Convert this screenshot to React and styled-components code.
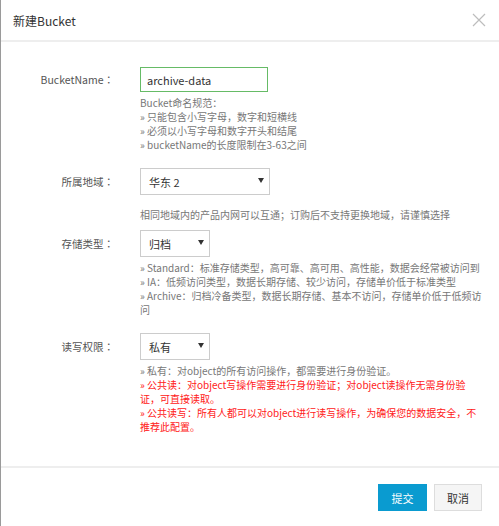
import React from "react";
import styled, { createGlobalStyle } from "styled-components";

const Global = createGlobalStyle`
  html, body { margin: 0; padding: 0; background: #fff; }
  body { font-family: "Noto Sans CJK SC", "Noto Sans", sans-serif; }
  * { box-sizing: border-box; }
`;

const Dialog = styled.div`
  width: 499px;
  height: 526px;
  border-left: 1px solid #9a9a9a;
  display: flex;
  flex-direction: column;
  background: #fff;
`;

const Header = styled.div`
  height: 42px;
  border-bottom: 2px solid #eeeeee;
  display: flex;
  align-items: center;
  justify-content: space-between;
  padding: 0 13px 0 12px;
`;

const Title = styled.div`
  font-size: 12px;
  color: #333;
  margin-top: 1px;
`;

const Close = styled.button`
  border: 0;
  background: none;
  padding: 0;
  width: 14px;
  height: 14px;
  display: flex;
  cursor: pointer;
`;

const Body = styled.div`
  flex: 1;
  padding-top: 25px;
`;

const Row = styled.div`
  display: grid;
  grid-template-columns: 113px 1fr;
  column-gap: 26px;
  margin-top: ${(p) => p.$mt || 0}px;
`;

const Label = styled.div`
  grid-column: 1;
  grid-row: 1;
  text-align: right;
  align-self: center;
  font-size: 10.5px;
  color: #555;
`;

const Colon = styled.span`
  font-family: "Noto Sans CJK TC", "Noto Sans CJK SC", sans-serif;
`;

const Control = styled.div`
  grid-column: 2;
  grid-row: 1;
  display: flex;
`;

const Input = styled.div`
  width: 128px;
  height: 25px;
  border: 1px solid #66bb66;
  font-size: 11px;
  color: #333;
  display: flex;
  align-items: center;
  padding-left: 6px;
`;

const Select = styled.div`
  width: ${(p) => p.$w}px;
  height: 27px;
  border: 1px solid #cccccc;
  font-size: 11px;
  color: #333;
  display: flex;
  align-items: center;
  justify-content: space-between;
  padding: 0 5px 0 8px;
`;

const Caret = styled.span`
  width: 0;
  height: 0;
  border-left: 3px solid transparent;
  border-right: 3px solid transparent;
  border-top: 5px solid #333;
  margin-top: -3px;
`;

const Help = styled.div`
  grid-column: 2;
  grid-row: 2;
  margin-top: ${(p) => p.$mt}px;
  font-size: 10px;
  line-height: 14px;
  color: #777;
  width: 345px;
`;

const Line = styled.div`
  white-space: nowrap;
  color: ${(p) => (p.$red ? "#ff2020" : "inherit")};
`;

const Footer = styled.div`
  height: 60px;
  border-top: 2px solid #eeeeee;
  display: flex;
  justify-content: flex-end;
  align-items: flex-start;
  gap: 7px;
  padding: 16px 17px 0 0;
`;

const Button = styled.button`
  width: ${(p) => p.$w}px;
  height: 27px;
  font-family: inherit;
  font-size: 11px;
  border: 1px solid ${(p) => (p.$primary ? "#0a9bd0" : "#dddddd")};
  background: ${(p) => (p.$primary ? "#0a9bd0" : "#f5f5f5")};
  color: ${(p) => (p.$primary ? "#fff" : "#333")};
  padding: 0;
  cursor: pointer;
`;

function FieldLabel({ children }) {
  return (
    <Label>
      {children}
      <Colon>：</Colon>
    </Label>
  );
}

export default function App() {
  return (
    <>
      <Global />
      <Dialog>
        <Header>
          <Title>新建Bucket</Title>
          <Close aria-label="close">
            <svg width="14" height="14" viewBox="0 0 14 14">
              <path d="M1 1 L13 13 M13 1 L1 13" stroke="#bdbdbd" strokeWidth="1.2" fill="none" />
            </svg>
          </Close>
        </Header>
        <Body>
          <Row>
            <FieldLabel>BucketName</FieldLabel>
            <Control>
              <Input>archive-data</Input>
            </Control>
            <Help $mt={4}>
              <Line>Bucket命名规范：</Line>
              <Line>» 只能包含小写字母，数字和短横线</Line>
              <Line>» 必须以小写字母和数字开头和结尾</Line>
              <Line>» bucketName的长度限制在3-63之间</Line>
            </Help>
          </Row>
          <Row $mt={16}>
            <FieldLabel>所属地域</FieldLabel>
            <Control>
              <Select $w={130}>
                华东 2<Caret />
              </Select>
            </Control>
            <Help $mt={13}>
              <Line>相同地域内的产品内网可以互通；订购后不支持更换地域，请谨慎选择</Line>
            </Help>
          </Row>
          <Row $mt={8}>
            <FieldLabel>存储类型</FieldLabel>
            <Control>
              <Select $w={70}>
                归档<Caret />
              </Select>
            </Control>
            <Help $mt={4}>
              <Line>» Standard：标准存储类型，高可靠、高可用、高性能，数据会经常被访问到</Line>
              <Line>» IA：低频访问类型，数据长期存储、较少访问，存储单价低于标准类型</Line>
              <Line>» Archive：归档冷备类型，数据长期存储、基本不访问，存储单价低于低频访</Line>
              <Line>问</Line>
            </Help>
          </Row>
          <Row $mt={16}>
            <FieldLabel>读写权限</FieldLabel>
            <Control>
              <Select $w={70}>
                私有<Caret />
              </Select>
            </Control>
            <Help $mt={4}>
              <Line>» 私有：对object的所有访问操作，都需要进行身份验证。</Line>
              <Line $red>» 公共读：对object写操作需要进行身份验证；对object读操作无需身份验</Line>
              <Line $red>证，可直接读取。</Line>
              <Line $red>» 公共读写：所有人都可以对object进行读写操作，为确保您的数据安全，不</Line>
              <Line $red>推荐此配置。</Line>
            </Help>
          </Row>
        </Body>
        <Footer>
          <Button $primary $w={49}>提交</Button>
          <Button $w={48}>取消</Button>
        </Footer>
      </Dialog>
    </>
  );
}
